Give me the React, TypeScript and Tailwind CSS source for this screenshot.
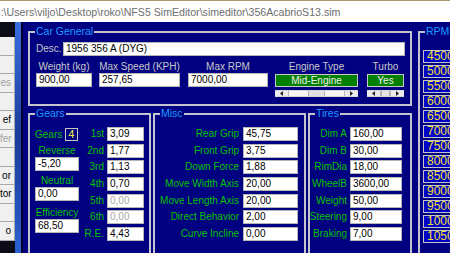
const TITLE = "C:\\Users\\viljo\\Desktop\\roko\\NFS5 SimEditor\\simeditor\\356AcabrioS13.sim";

const SIDE_BUTTONS: { text: string; dim?: boolean }[] = [
  { text: "" },
  { text: "" },
  { text: "es", dim: true },
  { text: "" },
  { text: "ef" },
  { text: "fer", dim: true },
  { text: "" },
  { text: "or" },
  { text: "tor" },
  { text: "" },
  { text: "o" },
];

const GEARS = [
  { label: "1st", value: "3,09" },
  { label: "2nd", value: "1,77" },
  { label: "3rd", value: "1,13" },
  { label: "4th", value: "0,70" },
  { label: "5th", value: "0,00", dim: true },
  { label: "6th", value: "0,00", dim: true },
  { label: "R.E.", value: "4,43" },
];

const MISC = [
  ["Rear Grip", "45,75"],
  ["Front Grip", "3,75"],
  ["Down Force", "1,88"],
  ["Move Width Axis", "20,00"],
  ["Move Length Axis", "20,00"],
  ["Direct Behavior", "2,00"],
  ["Curve Incline", "0,00"],
];

const TIRES = [
  ["Dim A", "160,00"],
  ["Dim B", "30,00"],
  ["RimDia", "18,00"],
  ["WheelB", "3600,00"],
  ["Weight", "50,00"],
  ["Steering", "9,00"],
  ["Braking", "7,00"],
];

const RPMS = [4500, 5000, 5500, 6000, 6500, 7000, 7500, 8000, 8500, 9000, 9500, 10000, 10500];

function Edit({ value, className = "", dim = false }: { value: string; className?: string; dim?: boolean }) {
  return (
    <div
      className={`h-[14px] shrink-0 bg-white border border-[#b4b4b4] pl-[2px] text-[10px] leading-[12px] whitespace-nowrap overflow-hidden ${
        dim ? "text-[#a8a8a8]" : "text-black"
      } ${className}`}
    >
      {value}
    </div>
  );
}

function Group({ title, className = "", children }: { title: string; className?: string; children?: React.ReactNode }) {
  return (
    <div className={`relative shrink-0 border-2 border-[#c4c4cc] ${className}`}>
      <div className="absolute left-[5px] top-[-8px] px-[1px] bg-[#000080] text-[#1e9bff] text-[10.5px] leading-[12px] whitespace-nowrap">
        {title}
      </div>
      {children}
    </div>
  );
}

function Arrow({ dir }: { dir: "l" | "r" }) {
  return (
    <svg width="3" height="5" viewBox="0 0 3 5">
      {dir === "l" ? <polygon points="3,0 0,2.5 3,5" fill="#222" /> : <polygon points="0,0 3,2.5 0,5" fill="#222" />}
    </svg>
  );
}

function HScroll({ gap, thumb }: { gap: number; thumb: string }) {
  return (
    <div className="mt-[3px] h-[7px] flex bg-[#f6f6f6] border-y border-[#d8d8d8]">
      <div className="w-[14px] flex items-center justify-center bg-[#ececec] border-r border-[#b8b8b8]">
        <Arrow dir="l" />
      </div>
      <div className="flex-1 flex">
        <div style={{ width: gap }} />
        <div className={`${thumb} bg-[#e2e2e2] border-x border-[#b0b0b0]`} />
      </div>
      <div className="w-[14px] flex items-center justify-center bg-[#ececec] border-l border-[#b8b8b8]">
        <Arrow dir="r" />
      </div>
    </div>
  );
}

function TopField({ label, value, className }: { label: string; value: string; className: string }) {
  return (
    <div className={`flex flex-col shrink-0 ${className}`}>
      <div className="h-[12px] text-center text-[10px] leading-[12px] text-[#c8c8c8] whitespace-nowrap">{label}</div>
      <Edit value={value} />
    </div>
  );
}

function GreenPick({ label, value, className, gap, thumb }: { label: string; value: string; className: string; gap: number; thumb: string }) {
  return (
    <div className={`flex flex-col shrink-0 ${className}`}>
      <div className="h-[12px] text-center text-[10px] leading-[12px] text-[#c8c8c8] whitespace-nowrap">{label}</div>
      <div className="mt-[1px] h-[13px] bg-[#008000] border border-[#c8c8c8] text-center text-[10px] leading-[11px] text-[#f0f0f0]">
        {value}
      </div>
      <HScroll gap={gap} thumb={thumb} />
    </div>
  );
}

function GreenLabel({ text, className = "" }: { text: string; className?: string }) {
  return <div className={`h-[12px] text-[10px] leading-[12px] text-[#00c400] whitespace-nowrap ${className}`}>{text}</div>;
}

export default function App() {
  return (
    <div className="w-[450px] h-[253px] overflow-hidden flex flex-col bg-[#000080] font-['Liberation_Sans',Arial,sans-serif]">
      {/* title bar */}
      <div className="h-[22px] shrink-0 bg-white border-t border-[#a8976a] overflow-hidden whitespace-nowrap">
        <div className="ml-[-7px] pt-[3px] text-[10.6px] leading-[17px] text-[#6e6e6e]">{TITLE}</div>
      </div>

      <div className="flex flex-1 min-h-0">
        {/* left side panel (cut off) */}
        <div className="w-[23px] shrink-0 flex">
          <div className="w-[15px] bg-[#0c0c18] flex flex-col">
            <div className="h-[15px] shrink-0" />
            {SIDE_BUTTONS.map((b, i) => (
              <div
                key={i}
                className={`h-[18.5px] shrink-0 bg-[#f0f0f0] border-b border-r border-[#a8a8a8] pr-[3px] text-right text-[10px] leading-[17px] ${
                  b.dim ? "text-[#a0a0a0]" : "text-black"
                }`}
              >
                {b.text}
              </div>
            ))}
          </div>
          <div className="w-[6px] bg-linear-to-b from-[#3a6ee0] via-[#1a3c9c] to-[#2c60d0]" />
          <div className="w-[2px] bg-[#000030]" />
        </div>

        {/* main form */}
        <div className="flex-1 flex overflow-hidden bg-[#000080]">
          <div className="w-[389px] shrink-0 pl-[5px] pt-[9px]">
            <Group title="Car General" className="w-[384px] h-[75px]">
              <div className="flex items-center mt-[9px] pl-[6px]">
                <div className="w-[27px] text-[10px] leading-[12px] text-[#c8c8c8]">Desc.</div>
                <Edit value="1956 356 A (DYG)" className="w-[342px]" />
              </div>
              <div className="flex items-start mt-[5px] pl-[6px]">
                <TopField label="Weight (kg)" value="900,00" className="w-[56px]" />
                <TopField label="Max Speed (KPH)" value="257,65" className="ml-[7px] w-[81px]" />
                <TopField label="Max RPM" value="7000,00" className="ml-[8px] w-[80px]" />
                <GreenPick label="Engine Type" value="Mid-Engine" className="ml-[7px] w-[83px]" gap={19} thumb="w-[17px]" />
                <GreenPick label="Turbo" value="Yes" className="ml-[9px] w-[37px]" gap={0} thumb="w-[9px]" />
              </div>
            </Group>

            <div className="flex gap-[2px] mt-[7px]">
              <Group title="Gears" className="w-[123px] h-[150px] flex">
                <div className="ml-[5px] w-[44px] pt-[13px] flex flex-col">
                  <div className="flex items-center h-[13px]">
                    <GreenLabel text="Gears" className="w-[30px]" />
                    <div className="w-[13px] h-[13px] bg-[#000080] border border-[#c8c8c8] text-center text-[10.5px] leading-[11px] text-[#ffff40]">
                      4
                    </div>
                  </div>
                  <GreenLabel text="Reverse" className="mt-[4px] text-center" />
                  <Edit value="-5,20" />
                  <GreenLabel text="Neutral" className="mt-[4px] text-center" />
                  <Edit value="0,00" />
                  <GreenLabel text="Efficiency" className="mt-[6px] text-center" />
                  <Edit value="68,50" />
                </div>
                <div className="ml-[4px] pt-[12px] flex flex-col">
                  {GEARS.map((g) => (
                    <div key={g.label} className="h-[16.67px] flex">
                      <div className="w-[21px] text-right text-[10px] leading-[14px] text-[#00c400] whitespace-nowrap">{g.label}</div>
                      <Edit value={g.value} dim={g.dim} className="ml-[3px] w-[37px]" />
                    </div>
                  ))}
                </div>
              </Group>

              <Group title="Misc" className="w-[153px] h-[150px]">
                <div className="pt-[12px] flex flex-col">
                  {MISC.map(([l, v]) => (
                    <div key={l} className="h-[16.67px] flex">
                      <div className="w-[84px] text-right text-[10px] leading-[14px] text-[#00c400] whitespace-nowrap">{l}</div>
                      <Edit value={v} className="ml-[4px] w-[55px]" />
                    </div>
                  ))}
                </div>
              </Group>

              <Group title="Tires" className="w-[104px] h-[150px]">
                <div className="pt-[12px] flex flex-col">
                  {TIRES.map(([l, v]) => (
                    <div key={l} className="h-[16.67px] flex">
                      <div className="w-[37px] flex justify-end text-[10px] leading-[14px] text-[#00c400] whitespace-nowrap">{l}</div>
                      <Edit value={v} className="ml-[3px] w-[52px]" />
                    </div>
                  ))}
                </div>
              </Group>
            </div>
          </div>

          <div className="ml-[6px] pt-[9px]">
            <Group title="RPM" className="w-[60px] h-[240px]">
              <div className="pl-[3px] pt-[17px] flex flex-col gap-[2px]">
                {RPMS.map((r) => (
                  <div
                    key={r}
                    className="w-[40px] h-[13px] bg-[#0000c8] border border-[#c4c4c4] pl-[3px] text-[12px] leading-[11px] text-[#f0e030]"
                  >
                    {r}
                  </div>
                ))}
              </div>
            </Group>
          </div>
        </div>
      </div>
    </div>
  );
}
